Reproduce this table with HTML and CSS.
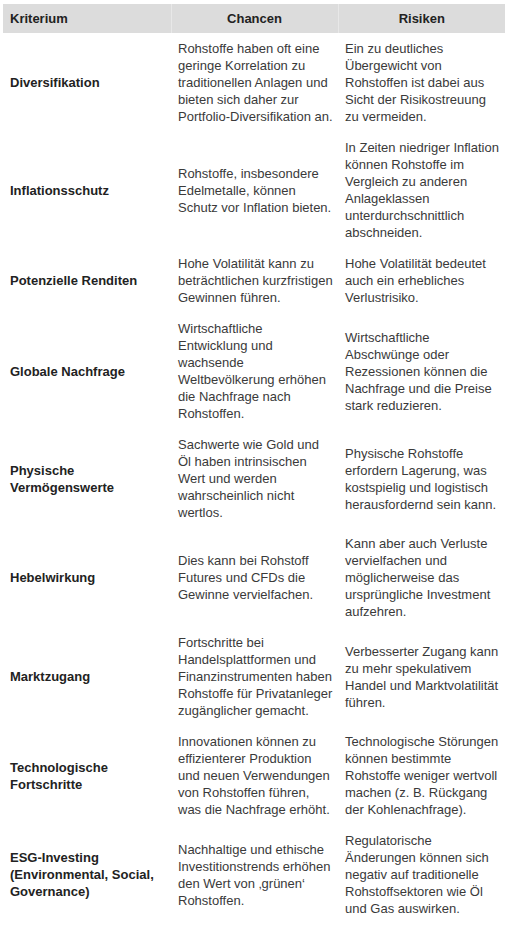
FILE: index.html
```html
<!DOCTYPE html>
<html lang="de">
<head>
<meta charset="utf-8">
<title>Rohstoffe – Chancen und Risiken</title>
<link rel="stylesheet" href="styles.css">
</head>
<body>
<div class="page">
<table class="compare">
<colgroup>
<col class="col-crit">
<col class="col-chance">
<col class="col-risk">
</colgroup>
<thead>
<tr>
<th class="h-left">Kriterium</th>
<th class="h-center">Chancen</th>
<th class="h-center">Risiken</th>
</tr>
</thead>
<tbody>
<tr>
<td class="crit">Diversifikation</td>
<td>Rohstoffe haben oft eine<br>geringe Korrelation zu<br>traditionellen Anlagen und<br>bieten sich daher zur<br>Portfolio-Diversifikation an.</td>
<td>Ein zu deutliches<br>Übergewicht von<br>Rohstoffen ist dabei aus<br>Sicht der Risikostreuung<br>zu vermeiden.</td>
</tr>
<tr>
<td class="crit">Inflationsschutz</td>
<td>Rohstoffe, insbesondere<br>Edelmetalle, können<br>Schutz vor Inflation bieten.</td>
<td>In Zeiten niedriger Inflation<br>können Rohstoffe im<br>Vergleich zu anderen<br>Anlageklassen<br>unterdurchschnittlich<br>abschneiden.</td>
</tr>
<tr>
<td class="crit">Potenzielle Renditen</td>
<td>Hohe Volatilität kann zu<br>beträchtlichen kurzfristigen<br>Gewinnen führen.</td>
<td>Hohe Volatilität bedeutet<br>auch ein erhebliches<br>Verlustrisiko.</td>
</tr>
<tr>
<td class="crit">Globale Nachfrage</td>
<td>Wirtschaftliche<br>Entwicklung und<br>wachsende<br>Weltbevölkerung erhöhen<br>die Nachfrage nach<br>Rohstoffen.</td>
<td>Wirtschaftliche<br>Abschwünge oder<br>Rezessionen können die<br>Nachfrage und die Preise<br>stark reduzieren.</td>
</tr>
<tr>
<td class="crit">Physische<br>Vermögenswerte</td>
<td>Sachwerte wie Gold und<br>Öl haben intrinsischen<br>Wert und werden<br>wahrscheinlich nicht<br>wertlos.</td>
<td>Physische Rohstoffe<br>erfordern Lagerung, was<br>kostspielig und logistisch<br>herausfordernd sein kann.</td>
</tr>
<tr>
<td class="crit">Hebelwirkung</td>
<td>Dies kann bei Rohstoff<br>Futures und CFDs die<br>Gewinne vervielfachen.</td>
<td>Kann aber auch Verluste<br>vervielfachen und<br>möglicherweise das<br>ursprüngliche Investment<br>aufzehren.</td>
</tr>
<tr>
<td class="crit">Marktzugang</td>
<td>Fortschritte bei<br>Handelsplattformen und<br>Finanzinstrumenten haben<br>Rohstoffe für Privatanleger<br>zugänglicher gemacht.</td>
<td>Verbesserter Zugang kann<br>zu mehr spekulativem<br>Handel und Marktvolatilität<br>führen.</td>
</tr>
<tr>
<td class="crit">Technologische<br>Fortschritte</td>
<td>Innovationen können zu<br>effizienterer Produktion<br>und neuen Verwendungen<br>von Rohstoffen führen,<br>was die Nachfrage erhöht.</td>
<td>Technologische Störungen<br>können bestimmte<br>Rohstoffe weniger wertvoll<br>machen (z. B. Rückgang<br>der Kohlenachfrage).</td>
</tr>
<tr>
<td class="crit">ESG-Investing<br>(Environmental, Social,<br>Governance)</td>
<td>Nachhaltige und ethische<br>Investitionstrends erhöhen<br>den Wert von ‚grünen‘<br>Rohstoffen.</td>
<td>Regulatorische<br>Änderungen können sich<br>negativ auf traditionelle<br>Rohstoffsektoren wie Öl<br>und Gas auswirken.</td>
</tr>
</tbody>
</table>
</div>
</body>
</html>
```

FILE: styles.css
```css
html, body {
  margin: 0;
  padding: 0;
  background: #ffffff;
}

body {
  font-family: "Liberation Sans", Arial, sans-serif;
}

.page {
  padding: 4px 3px;
}

.compare {
  width: 502px;
  border-collapse: collapse;
  table-layout: fixed;
  font-size: 13px;
  line-height: 17px;
  color: #3a3a3a;
}

.col-crit {
  width: 168px;
}

.col-chance {
  width: 167px;
}

.col-risk {
  width: 167px;
}

.compare th {
  background: #dcdcdc;
  color: #222222;
  font-weight: bold;
  padding: 6px 7px;
}

.compare th + th {
  border-left: 1px solid #e8e8e8;
}

.h-left {
  text-align: left;
}

.h-center {
  text-align: center;
}

.compare td {
  padding: 7px 7px;
  vertical-align: middle;
  white-space: nowrap;
  text-align: left;
}

.compare td.crit {
  font-weight: bold;
  color: #222222;
}
```
